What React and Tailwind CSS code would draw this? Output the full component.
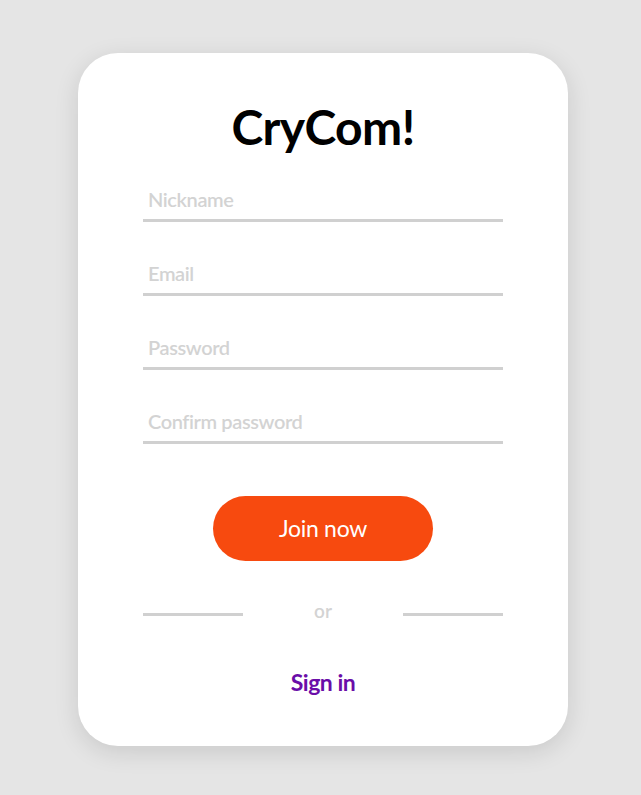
import React from 'react';

const fields = ['Nickname', 'Email', 'Password', 'Confirm password'];

const App = () => {
  return (
    <main
      className="min-h-[795px] w-full bg-[#e5e5e5] flex justify-center pt-[53px] pl-[5px]"
      style={{ fontFamily: 'Lato, "Open Sans", sans-serif' }}
    >
      <div className="w-[490px] h-[693px] bg-white rounded-[40px] shadow-[0_6px_24px_rgba(0,0,0,0.12)] px-[65px] pt-[42px] flex flex-col">
        <h1 className="text-center text-[48px] font-bold leading-[64px] tracking-[-0.6px] text-black">CryCom!</h1>
        <form className="mt-[21px] flex flex-col gap-[32px]">
          {fields.map((f) => (
            <input
              key={f}
              type={f.includes('assword') ? 'password' : 'text'}
              placeholder={f}
              className="h-[42px] w-full border-b-[3px] border-[#d0d0d0] px-[5px] pt-[0px] pb-[2px] text-[20px] font-semibold outline-none placeholder:text-[#d3d3d3] tracking-[-0.4px]"
            />
          ))}
        </form>
        <button className="mt-[52px] self-center w-[220px] h-[65px] rounded-full bg-[#f74a0f] text-white text-[23px] tracking-[-0.3px]">
          Join now
        </button>
        <div className="mt-[40px] flex items-center justify-between">
          <div className="w-[100px] h-[3px] bg-[#d0d0d0]" />
          <span className="text-[19px] font-semibold text-[#d3d3d3] leading-[32px] -mt-[6px]">or</span>
          <div className="w-[100px] h-[3px] bg-[#d0d0d0]" />
        </div>
        <a href="#" className="mt-[38px] self-center text-[23px] font-bold text-[#6a0da8] tracking-[-0.5px]">
          Sign in
        </a>
      </div>
    </main>
  );
};

export default App;
